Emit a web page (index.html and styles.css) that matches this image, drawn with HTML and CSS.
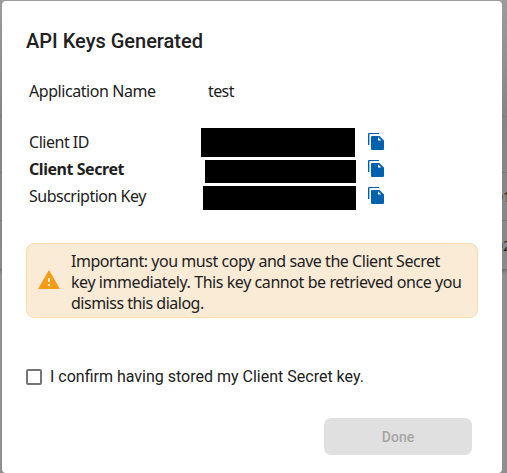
FILE: index.html
```html
<!DOCTYPE html>
<html lang="en">
<head>
<meta charset="utf-8">
<title>API Keys Generated</title>
<link rel="stylesheet" href="styles.css">
</head>
<body>
<svg class="sprite" aria-hidden="true">
  <symbol id="copy" viewBox="0 0 16 17"><path d="M0 1Q0 0 1 0H11V1H1.4V12H0z"/><path d="M4 3H11.5L16 7.5V16Q16 17 15 17H4Q3 17 3 16V4Q3 3 4 3zM10 4.3V7.5H13.4z"/></symbol>
</svg>
<div class="page" aria-hidden="true">
  <div class="page-head"></div>
  <div class="page-row"></div>
  <div class="page-row"><span>01</span></div>
  <div class="page-row"><span>02</span></div>
</div>
<main class="dialog" role="dialog">
  <h1>API Keys Generated</h1>
  <div class="field app"><span class="label w-app">Application Name</span><span class="w-test">test</span></div>
  <div class="keys">
    <div class="field"><span class="label w-id">Client ID</span><span class="mask mask-id"></span><svg class="copy"><use href="#copy"/></svg></div>
    <div class="field"><b class="label w-secret">Client Secret</b><span class="mask mask-secret"></span><svg class="copy"><use href="#copy"/></svg></div>
    <div class="field"><span class="label w-sub">Subscription Key</span><span class="mask mask-sub"></span><svg class="copy"><use href="#copy"/></svg></div>
  </div>
  <div class="notice">
    <svg class="warning" viewBox="0 0 24 24"><path d="M1 21h22L12 2 1 21zm12-3h-2v-2h2v2zm0-4h-2v-4h2v4z"/></svg>
    <p><span class="n1">Important: you must copy and save the Client Secret</span><br><span class="n2">key immediately. This key cannot be retrieved once you</span><br><span class="n3">dismiss this dialog.</span></p>
  </div>
  <label class="confirm"><input type="checkbox"><span>I confirm having stored my Client Secret key.</span></label>
  <div class="actions"><button disabled>Done</button></div>
</main>
</body>
</html>
```

FILE: styles.css
```css
* { box-sizing: border-box; }
body {
  margin: 0;
  height: 473px;
  overflow: hidden;
  position: relative;
  background: #8f8f8f;
  color: #212121;
  font: 16px/21px "Noto Sans", "Open Sans", sans-serif;
}
.sprite { position: absolute; width: 0; height: 0; }
.page {
  position: absolute;
  inset: 0 0 auto 0;
  height: 269px;
  background: linear-gradient(#9c9c9c, #858585 116px, #8a8a8a);
  box-shadow: 0 2px 4px rgba(0, 0, 0, .3);
}
.page-head { height: 117px; border-bottom: 1px solid #7d7d7d; }
.page-row {
  height: 48px;
  border-bottom: 1px solid #777;
  display: flex;
  align-items: center;
  justify-content: flex-end;
  font-size: 14px;
}
.page-row:nth-child(2) { height: 56px; }
.page-row:last-child { border-bottom: 0; }
.page-row span { margin-right: -4px; }
.dialog {
  position: relative;
  width: 500px;
  height: 472px;
  margin: 1px 0 0 2px;
  padding: 24px;
  border-radius: 4px;
  background: #fff;
  overflow: hidden;
}
h1 { margin: 0; font: 500 20px/32px Roboto, sans-serif; color: #212121; }
.field { display: flex; align-items: center; height: 27px; padding-left: 3px; white-space: nowrap; }
.label { width: 179px; flex: none; }
.app { margin-top: 21px; }
.keys { margin-top: 24px; }
.mask { flex: none; background: #000; }
.mask-id { width: 154px; height: 29px; margin-left: -7px; }
.mask-secret { width: 151px; height: 23px; margin: 3px 0 0 -3px; }
.mask-sub { width: 153px; height: 24px; margin: 3px 0 0 -5px; }
.copy { width: 16px; height: 17px; margin: -2px 0 0 13px; fill: #0061af; }
.mask-secret + .copy, .mask-sub + .copy { margin-left: 12px; }
.notice {
  display: flex;
  align-items: center;
  width: 452px;
  height: 75px;
  margin-top: 33px;
  padding: 0 10px;
  border: 1px solid #f9dcae;
  border-radius: 8px;
  background: #faebd7;
}
.warning { width: 24px; height: 24px; margin: -2px 10px 0 0; fill: #f59b14; flex: none; }
.notice p { margin: 3px 0 0; white-space: nowrap; }
.confirm {
  display: flex;
  align-items: center;
  height: 24px;
  margin-top: 47px;
  font: 16px/24px Roboto, sans-serif;
}
.confirm input {
  appearance: none;
  width: 16px;
  height: 16px;
  margin: 0 8px 0 0;
  border: 2px solid #757575;
  border-radius: 2px;
}
.actions { display: flex; justify-content: flex-end; margin: 29px 6px 0 0; }
button {
  width: 148px;
  height: 37px;
  padding: 1px 0 0;
  border: 0;
  border-radius: 7px;
  background: #e0e0e0;
  color: #a6a6a6;
  font: 500 14px/36px Roboto, sans-serif;
}
.w-app { letter-spacing: -.44px; }
.w-id { letter-spacing: -.48px; }
.w-secret { letter-spacing: -.45px; }
.w-sub { letter-spacing: -.5px; }
.w-test { letter-spacing: -.6px; }
.n1 { letter-spacing: -.46px; }
.n2 { letter-spacing: -.43px; }
.n3 { letter-spacing: -.5px; }
```
